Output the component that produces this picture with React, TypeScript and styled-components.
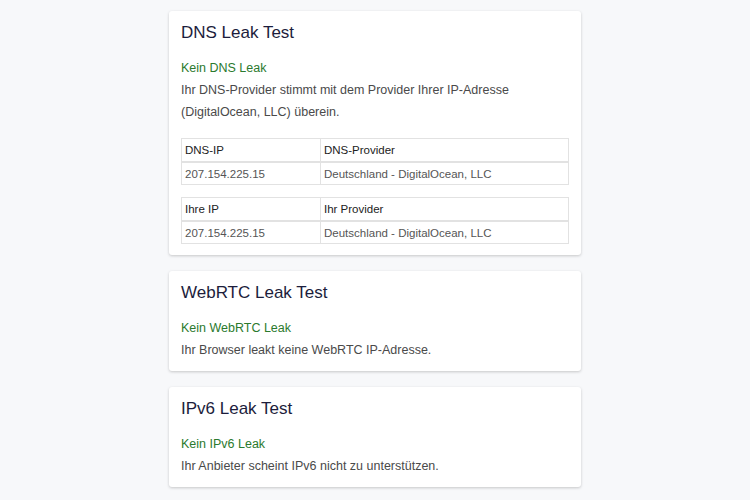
import React from "react";
import styled, { createGlobalStyle } from "styled-components";

const Global = createGlobalStyle`
  html, body { margin: 0; padding: 0; background: #f7f8fa; }
  body { font-family: "Liberation Sans", Arial, sans-serif; }
`;

const Page = styled.div`
  display: flex;
  flex-direction: column;
  align-items: center;
  gap: 16px;
  padding: 11px 0 20px;
`;

const Card = styled.section`
  width: 412px;
  box-sizing: border-box;
  background: #fff;
  border-radius: 3px;
  box-shadow: 0 1px 3px rgba(0, 0, 0, 0.2);
  padding: 11px 12px 10px;
`;

const Title = styled.h2`
  margin: 0 0 13px;
  font-size: 17px;
  line-height: 22px;
  font-weight: 400;
  color: #1c1d3c;
`;

const Status = styled.div`
  font-size: 12.5px;
  line-height: 22px;
  color: #2b7a2e;
`;

const Body = styled.p`
  margin: 0;
  font-size: 12.5px;
  line-height: 22px;
  color: #4a4a4a;
`;

const Tables = styled.div`
  display: flex;
  flex-direction: column;
  gap: 12px;
  margin-top: 15px;
  margin-bottom: 1px;
`;

const Table = styled.table`
  width: 100%;
  border-collapse: collapse;
  font-size: 11.5px;
  border: 1px solid #e2e2e2;
`;

const Th = styled.th<{ $w?: string }>`
  text-align: left;
  font-weight: 400;
  color: #222;
  padding: 4px 3px;
  height: 14px;
  line-height: 14px;
  border: 1px solid #e2e2e2;
  border-bottom: 2px solid #e2e2e2;
  width: ${(p) => p.$w || "auto"};
`;

const Td = styled.td`
  color: #555;
  padding: 4px 3px 3px;
  height: 14px;
  line-height: 14px;
  border: 1px solid #e2e2e2;
`;

const InfoTable = ({ h1, h2, v1, v2 }: { h1: string; h2: string; v1: string; v2: string }) => (
  <Table>
    <thead>
      <tr>
        <Th $w="132px">{h1}</Th>
        <Th>{h2}</Th>
      </tr>
    </thead>
    <tbody>
      <tr>
        <Td>{v1}</Td>
        <Td>{v2}</Td>
      </tr>
    </tbody>
  </Table>
);

export default function App() {
  return (
    <>
      <Global />
      <Page>
        <Card>
          <Title>DNS Leak Test</Title>
          <Status>Kein DNS Leak</Status>
          <Body>
            Ihr DNS-Provider stimmt mit dem Provider Ihrer IP-Adresse (DigitalOcean, LLC) überein.
          </Body>
          <Tables>
            <InfoTable h1="DNS-IP" h2="DNS-Provider" v1="207.154.225.15" v2="Deutschland - DigitalOcean, LLC" />
            <InfoTable h1="Ihre IP" h2="Ihr Provider" v1="207.154.225.15" v2="Deutschland - DigitalOcean, LLC" />
          </Tables>
        </Card>
        <Card>
          <Title>WebRTC Leak Test</Title>
          <Status>Kein WebRTC Leak</Status>
          <Body>Ihr Browser leakt keine WebRTC IP-Adresse.</Body>
        </Card>
        <Card>
          <Title>IPv6 Leak Test</Title>
          <Status>Kein IPv6 Leak</Status>
          <Body>Ihr Anbieter scheint IPv6 nicht zu unterstützen.</Body>
        </Card>
      </Page>
    </>
  );
}
